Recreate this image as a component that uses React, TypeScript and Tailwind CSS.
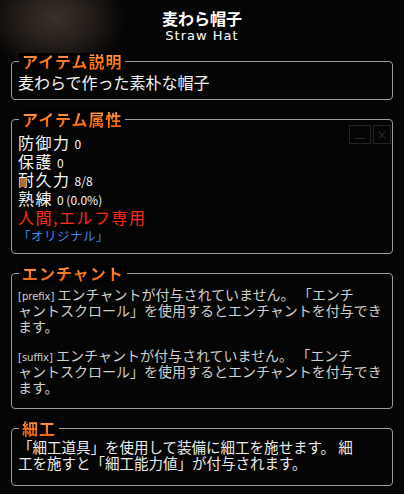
import React from "react";

const jp = "font-['Noto_Sans_CJK_JP','Noto_Sans',sans-serif]";

function Section({ title, children, className = "" }: { title: string; children: React.ReactNode; className?: string }) {
    return (
        <fieldset className={`border border-[#9c9c9c] rounded-[4px] px-[6px] m-0 min-w-0 ${className}`}>
            <legend className="px-[3px] ml-[1px] bg-black text-[16px] leading-[16px] font-bold tracking-[1px]">
                <span className="bg-gradient-to-b from-[#ffb060] via-[#ff7a1c] to-[#e65a00] bg-clip-text text-transparent">{title}</span>
            </legend>
            {children}
        </fieldset>
    )
}

export default function App() {
    return (
        <div className={`relative w-[404px] h-[494px] overflow-hidden bg-[#040404] bg-[radial-gradient(ellipse_70px_55px_at_55px_18px,#3a3029_0%,#221c18_55%,#060505_100%)] ${jp}`}>
            <div className="pt-[9px] flex flex-col items-center text-white">
                <div className="text-[16px] leading-[19px] font-bold">麦わら帽子</div>
                <div className="text-[13px] leading-[15px] font-['DejaVu_Sans',sans-serif] tracking-[1px]">Straw Hat</div>
            </div>

            <div className="flex flex-col gap-[11px] px-[11px] pt-[10px]">
                <Section title="アイテム説明" className="pb-[8px]">
                    <div className="text-[16px] leading-[18px] text-[#f2f2f2] pt-[4px]">麦わらで作った素朴な帽子</div>
                </Section>

                <Section title="アイテム属性" className="pb-[8px] relative">
                    <div className="absolute right-[1px] -top-[2px] flex gap-[2px] opacity-60">
                        <div className="w-[22px] h-[19px] border border-[#3a3a3a] flex items-end justify-center pb-[4px]">
                            <div className="w-[10px] h-[1px] bg-[#4a4a4a]"></div>
                        </div>
                        <div className="w-[18px] h-[19px] border border-[#3a3a3a] text-[#4a4a4a] text-[12px] leading-[17px] text-center">×</div>
                    </div>
                    <div className="text-[16px] tracking-[1.5px] text-[#f4f4f4] pt-[6px]">
                        <div className="h-[18.6px] leading-[18.6px] flex items-baseline">防御力 <span className="ml-[4px] text-[12px] leading-none tracking-normal">0</span></div>
                        <div className="h-[18.6px] leading-[18.6px] flex items-baseline">保護 <span className="ml-[4px] text-[12px] leading-none tracking-normal">0</span></div>
                        <div className="h-[18.6px] leading-[18.6px] flex items-baseline">耐久力 <span className="ml-[4px] text-[12px] leading-none tracking-normal">8/8</span></div>
                        <div className="h-[18.6px] leading-[18.6px] flex items-baseline">熟練 <span className="ml-[4px] text-[12px] leading-none tracking-normal">0 (0.0%)</span></div>
                        <div className="h-[19px] leading-[20px] text-[#ff2a1e]">人間,エルフ専用</div>
                        <div className="h-[19px] leading-[20px] text-[#3f86e6] text-[12.5px] tracking-[0.5px]">「オリジナル」</div>
                    </div>
                </Section>

                <Section title="エンチャント" className="pb-[13px]">
                    <div className="text-[14px] leading-[16px] text-[#cfcfcf] pt-[5px] flex flex-col gap-[13px] whitespace-nowrap">
                        <div>
                            <span className="text-[10px] leading-none font-['DejaVu_Sans',sans-serif]">[prefix]</span> エンチャントが付与されていません。 「エンチ<br />
                            ャントスクロール」を使用するとエンチャントを付与でき<br />
                            ます。
                        </div>
                        <div>
                            <span className="text-[10px] leading-none font-['DejaVu_Sans',sans-serif]">[suffix]</span> エンチャントが付与されていません。 「エンチ<br />
                            ャントスクロール」を使用するとエンチャントを付与でき<br />
                            ます。
                        </div>
                    </div>
                </Section>

                <Section title="細工" className="pb-[14px]">
                    <div className="text-[14.5px] leading-[16px] text-[#ececec] pt-[3px] whitespace-nowrap">
                        「細工道具」を使用して装備に細工を施せます。 細<br />
                        工を施すと「細工能力値」が付与されます。
                    </div>
                </Section>
            </div>
        </div>
    )
}
